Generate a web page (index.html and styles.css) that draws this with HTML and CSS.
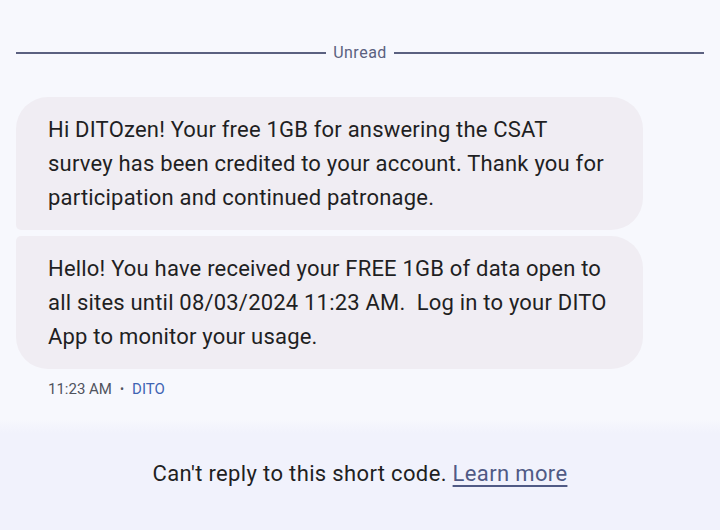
FILE: index.html
```html
<!DOCTYPE html>
<html>
<head>
<meta charset="utf-8">
<link rel="stylesheet" href="styles.css">
</head>
<body>
<div class="page">
  <div class="divider">
    <span class="rule"></span>
    <span class="label">Unread</span>
    <span class="rule"></span>
  </div>
  <div class="messages">
    <div class="bubble first">Hi DITOzen! Your free 1GB for answering the CSAT survey has been credited to your account. Thank you for participation and continued patronage.</div>
    <div class="bubble last">Hello! You have received your FREE 1GB of data open to all sites until 08/03/2024 11:23 AM.&nbsp; Log in to your DITO App to monitor your usage.</div>
    <div class="meta"><span>11:23 AM</span><span class="dot">•</span><span class="sender">DITO</span></div>
  </div>
  <div class="footer">
    <span>Can't reply to this short code. <a class="link" href="#">Learn more</a></span>
  </div>
</div>
</body>
</html>
```
FILE: styles.css
```css
html, body {
  margin: 0;
  padding: 0;
  background: #f7f8fd;
}
body {
  font-family: Roboto, "Noto Sans", sans-serif;
  width: 720px;
  height: 530px;
  overflow: hidden;
}
.page {
  display: flex;
  flex-direction: column;
  height: 530px;
}
.divider {
  display: flex;
  align-items: center;
  gap: 7px;
  padding: 43px 16px 0 16px;
  height: 20px;
}
.rule {
  flex: 1;
  height: 2px;
  background: #5b6180;
}
.label {
  font-size: 16px;
  letter-spacing: 0.5px;
  color: #5b6180;
  line-height: 20px;
}
.messages {
  display: flex;
  flex-direction: column;
  gap: 6px;
  padding: 34px 0 0 16px;
}
.bubble {
  width: 627px;
  box-sizing: border-box;
  padding: 16px 33px 15px 32px;
  background: #f0edf3;
  color: #1f1f23;
  font-size: 22px;
  letter-spacing: 0.2px;
  line-height: 34px;
  border-radius: 32px;
}
.bubble.first {
  border-bottom-left-radius: 5px;
}
.bubble.last {
  border-top-left-radius: 5px;
}
.meta {
  display: flex;
  align-items: center;
  gap: 8px;
  padding: 4px 0 0 32px;
  font-size: 15px;
  line-height: 20px;
  color: #50535e;
}
.dot {
  font-size: 12px;
}
.sender {
  color: #3f64b3;
}
.footer {
  margin-top: 20px;
  flex: 1;
  display: flex;
  align-items: center;
  justify-content: center;
  background: linear-gradient(#f7f8fd 0px, #f1f2fc 14px, #f1f2fc 100%);
  font-size: 22px;
  letter-spacing: 0.35px;
  color: #1f1f23;
  padding-bottom: 2px;
}
.link {
  color: #505a85;
  text-decoration: underline;
  text-decoration-thickness: 2px;
  text-underline-offset: 4px;
}
```
